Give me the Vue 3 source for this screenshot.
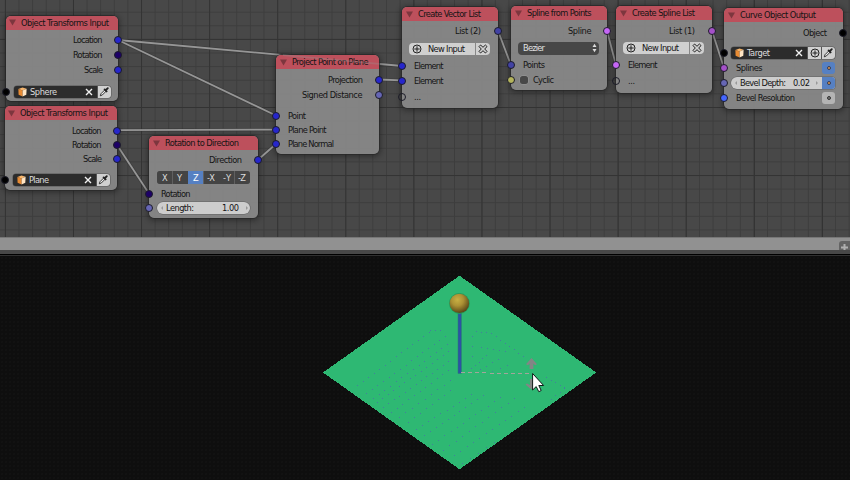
<script setup>
import { h } from 'vue'

// Tightly tracked label: keeps its text at a fixed advance width
const Label = (p) =>
  h('svg', { class: 'lbl', width: p.w, height: 14 }, [
    h('text', { x: 0, y: 10.4, textLength: p.w, lengthAdjust: 'spacing' }, p.t)
  ])
Label.props = ['t', 'w']

const BLUE = '#2626cc'
const NAVY = '#1d0067'
const LAV = '#6666b4'
const BLACK = '#000'
const MAG = '#c566f6'
const NONE = 'transparent'

const nodes = [
  { x: 5.5, y: 15.5, w: 112.5, h: 85.5, title: 'Object Transforms Input', tw: 88, rows: [
    { c: 40, k: 'out', t: 'Location', w: 29.5, pad: 16, s: BLUE },
    { c: 55, k: 'out', t: 'Rotation', w: 29.5, pad: 16, s: NAVY },
    { c: 70, k: 'out', t: 'Scale', w: 19, pad: 15.5, s: BLUE },
    { c: 91.8, k: 'object', t: 'Sphere', w: 27, s: BLACK }
  ] },
  { x: 4.5, y: 106, w: 112.5, h: 84, title: 'Object Transforms Input', tw: 88, rows: [
    { c: 130.5, k: 'out', t: 'Location', w: 29.5, pad: 16, s: BLUE },
    { c: 144.7, k: 'out', t: 'Rotation', w: 29.5, pad: 16, s: NAVY },
    { c: 159, k: 'out', t: 'Scale', w: 19, pad: 15.5, s: BLUE },
    { c: 180, k: 'object', t: 'Plane', w: 20, s: BLACK }
  ] },
  { x: 149, y: 136, w: 109, h: 82, title: 'Rotation to Direction', tw: 74, rows: [
    { c: 160, k: 'out', t: 'Direction', w: 33, pad: 16, s: BLUE },
    { c: 177.3, k: 'axes' },
    { c: 193.8, k: 'in', t: 'Rotation', w: 29.5, s: NAVY },
    { c: 208, k: 'length', s: LAV }
  ] },
  { x: 276, y: 55.3, w: 103, h: 98.7, title: 'Project Point on Plane', tw: 76.5, rows: [
    { c: 79.7, k: 'out', t: 'Projection', w: 35, pad: 16.5, s: BLUE },
    { c: 94.7, k: 'out', t: 'Signed Distance', w: 60.5, pad: 16.5, s: LAV },
    { c: 115.6, k: 'in', t: 'Point', w: 18, s: BLUE },
    { c: 129.8, k: 'in', t: 'Plane Point', w: 38.5, s: BLUE },
    { c: 144, k: 'in', t: 'Plane Normal', w: 46, s: BLUE }
  ] },
  { x: 402, y: 7.3, w: 96, h: 100.7, title: 'Create Vector List', tw: 63, rows: [
    { c: 31.5, k: 'out', t: 'List (2)', w: 26, pad: 17, s: '#4242a4' },
    { c: 49, k: 'new' },
    { c: 66, k: 'in', t: 'Element', w: 29.5, s: BLUE },
    { c: 81, k: 'in', t: 'Element', w: 29.5, s: BLUE },
    { c: 97, k: 'in', t: '...', w: 7, s: NONE }
  ] },
  { x: 511, y: 6.3, w: 96, h: 84, title: 'Spline from Points', tw: 64.5, rows: [
    { c: 31, k: 'out', t: 'Spline', w: 23.5, pad: 16, s: MAG },
    { c: 48.3, k: 'select', t: 'Bezier', w: 22 },
    { c: 65, k: 'in', t: 'Points', w: 22, s: '#4242a4' },
    { c: 80, k: 'check', t: 'Cyclic', w: 21, s: '#b4b45c' }
  ] },
  { x: 616, y: 6.3, w: 96, h: 86.7, title: 'Create Spline List', tw: 63, rows: [
    { c: 31, k: 'out', t: 'List (1)', w: 26, pad: 17, s: '#a450c8' },
    { c: 48, k: 'new' },
    { c: 65, k: 'in', t: 'Element', w: 29.5, s: MAG },
    { c: 81.5, k: 'in', t: '...', w: 7, s: NONE }
  ] },
  { x: 724, y: 8, w: 119, h: 101, title: 'Curve Object Output', tw: 76, rows: [
    { c: 32.6, k: 'out', t: 'Object', w: 24, pad: 16, s: BLACK },
    { c: 52.8, k: 'target', t: 'Target', w: 23, s: BLACK },
    { c: 67.8, k: 'in', t: 'Splines', w: 26.5, s: '#a450c8', btn: 'on' },
    { c: 82.8, k: 'bevel', s: LAV },
    { c: 97.8, k: 'in', t: 'Bevel Resolution', w: 59, s: '#4466ff', btn: 'off' }
  ] }
]

const axes = ['X', 'Y', 'Z', '-X', '-Y', '-Z']
const gap = (n, i) => (i ? n.rows[i].c - n.rows[i - 1].c - 14 : n.rows[0].c - 7 - n.y - 14) + 'px'

const wires = [
  [118, 40, 402, 66], [118, 40, 276, 115.5], [117, 130.2, 276, 129.6], [117, 145, 149, 193.5],
  [258, 159.7, 276, 144], [379, 79.5, 402, 80.3], [498, 31, 511, 65], [607, 31, 616, 65], [712, 31, 724, 68]
]

// Dotted rows on the plane: x1, y1, x2, y2, count
const runs = [
  [357, 385, 429, 332, 14], [366, 393, 445, 336, 15],
  [373, 398, 447, 344, 14], [377, 402, 448, 351, 14], [383, 407, 448, 361, 13], [391, 412, 448, 370, 11],
  [399, 417, 450, 380, 9], [408, 422, 450, 390, 8], [416, 429, 471, 394, 10], [424, 435, 483, 395, 11],
  [432, 444, 500, 397, 12], [443, 450, 514, 398, 12], [454, 455, 524, 407, 12], [462, 463, 494, 442, 5],
  [430, 330, 440, 330, 3], [476, 331, 491, 333, 4], [472, 336, 472, 356, 3], [491, 333, 523, 356, 8],
  [481, 347, 505, 351, 5], [471, 368, 486, 355, 5], [480, 369, 498, 359, 4], [492, 371, 507, 365, 3],
  [546, 377, 564, 387, 5], [551, 399, 564, 388, 4]
]
const dots = runs.flatMap(([a, b, c, d, n]) =>
  Array.from({ length: n }, (_, i) => [
    Math.round(a + ((c - a) * i) / (n - 1)), Math.round(b + ((d - b) * i) / (n - 1))
  ])
)
</script>

<template>
  <main class="screen">
    <section class="editor">
      <svg class="wires" width="850" height="237">
        <g v-for="(w, i) in wires" :key="i">
          <line class="shade" :x1="w[0]" :y1="w[1]" :x2="w[2]" :y2="w[3]" />
          <line class="core" :x1="w[0]" :y1="w[1]" :x2="w[2]" :y2="w[3]" />
        </g>
      </svg>

      <article v-for="(n, ni) in nodes" :key="ni" class="node"
        :style="{ left: n.x + 'px', top: n.y + 'px', width: n.w + 'px', height: n.h + 'px' }">
        <header>
          <svg class="tri" width="7" height="7"><path d="M0 .5H7L3.5 6.5Z" /></svg>
          <Label :t="n.title" :w="n.tw" />
        </header>
        <div v-for="(r, i) in n.rows" :key="i" class="row" :class="r.k" :style="{ marginTop: gap(n, i) }">
          <i v-if="r.s" class="socket" :style="{ background: r.s }"></i>

          <span v-if="r.k === 'out'" :style="{ paddingRight: r.pad + 'px' }"><Label :t="r.t" :w="r.w" /></span>

          <template v-else-if="r.k === 'in'">
            <Label :t="r.t" :w="r.w" />
            <b v-if="r.btn" class="dot" :class="r.btn"></b>
          </template>

          <div v-else-if="r.k === 'object' || r.k === 'target'" class="field">
            <svg class="cube" width="9" height="10" viewBox="0 0 9 10">
              <path fill="#f6b56c" d="M.4 2 4.5.4 8.6 1.8 4.6 3.4Z" />
              <path fill="#e88b33" d="M.4 2 4.6 3.4V9.6L.6 7.8Z" />
              <path fill="#ffe5c4" d="M4.6 3.4 8.6 1.8 8.3 7.8 4.6 9.6Z" />
            </svg>
            <Label :t="r.t" :w="r.w" />
            <svg class="x" width="8" height="8"><path d="M1 1 7 7M7 1 1 7" /></svg>
            <span v-if="r.k === 'target'" class="light">
              <svg width="10" height="10"><circle cx="5" cy="5" r="4" /><path d="M5 2.5V7.5M2.5 5H7.5" /></svg>
            </span>
            <span class="light">
              <svg width="11" height="11"><path class="fine" d="M1.3 9.8 2 7.7 6 3.7 7.3 5 3.3 9Z" /><path class="bulb" d="M5.6 3.4 7.6 5.4M7 4 8.8 2.2" /></svg>
            </span>
          </div>

          <div v-else-if="r.k === 'axes'" class="seg">
            <span v-for="a in axes" :key="a" :class="{ on: a === 'Z' }"><Label :t="a" :w="a.length > 1 ? 8 : 5.8" /></span>
          </div>

          <div v-else-if="r.k === 'length'" class="num">
            <i class="tl"></i><Label t="Length:" :w="28" /><Label class="val" t="1.00" :w="17" /><i class="tr"></i>
          </div>

          <div v-else-if="r.k === 'bevel'" class="num part">
            <i class="tl"></i><Label t="Bevel Depth:" :w="46" /><Label class="val" t="0.02" :w="17" /><i class="tr"></i>
            <b class="dot on"></b>
          </div>

          <div v-else-if="r.k === 'new'" class="adder">
            <span class="plus"><svg width="10" height="10"><circle cx="5" cy="5" r="4" /><path d="M5 2.3V7.7M2.3 5H7.7" /></svg></span>
            <Label t="New Input" :w="37" />
            <span class="close"><svg width="10" height="10"><path d="M2.6 1 5 3.3 7.4 1 9 2.6 6.7 5 9 7.4 7.4 9 5 6.7 2.6 9 1 7.4 3.3 5 1 2.6Z" /></svg></span>
          </div>

          <div v-else-if="r.k === 'select'" class="drop-down">
            <Label :t="r.t" :w="r.w" />
            <svg width="5" height="10"><path d="M.5 4 2.5.8 4.5 4ZM.5 6 2.5 9.2 4.5 6Z" /></svg>
          </div>

          <template v-else-if="r.k === 'check'">
            <i class="box"></i><Label :t="r.t" :w="r.w" />
          </template>
        </div>
      </article>

      <svg class="wires ghost" width="850" height="237">
        <line class="core" x1="283" y1="55.2" x2="379" y2="63.9" />
      </svg>
    </section>

    <div class="bar"><span><svg width="7" height="7"><path d="M3.5 0V7M0 3.5H7" /></svg></span></div>
    <div class="edge"></div>

    <section class="view">
      <svg width="850" height="224" viewBox="0 256 850 224">
        <defs>
          <radialGradient id="ball" cx=".4" cy=".32" r=".68">
            <stop offset="0" stop-color="#c8b043" />
            <stop offset=".45" stop-color="#ac9134" />
            <stop offset="1" stop-color="#594717" />
          </radialGradient>
        </defs>
        <path d="M459.5 275.7 596.2 372.5 459.5 469.3 323 372.5Z" fill="#2eb873" shape-rendering="crispEdges" />
        <g fill="#43809d"><rect v-for="(d, i) in dots" :key="i" :x="d[0]" :y="d[1]" width="1" height="1" /></g>
        <rect x="458" y="311" width="3.4" height="62.5" fill="#2c53a3" stroke="#277e70" stroke-width=".5" />
        <circle cx="459.4" cy="303.5" r="10.4" fill="#279858" />
        <circle cx="459.4" cy="303.4" r="9.7" fill="url(#ball)" />
        <path d="M461 372.5H487M490 373.5H530" stroke="#a3a49a" stroke-dasharray="4 3" />
        <path d="M531.5 358 537 364.3 535 365.2 533.4 363.5V369H529.6V363.5L528 365.2 526 364.3Z" fill="#848585" />
        <path d="M530 379H534V390L530 388.5 525.5 384.5 527 383.5 530 385Z" fill="#848585" />
        <path d="M532.6 373.5V390L536.2 386.6 538.8 391.7 541.2 390.5 538.8 385.5H543.6Z" fill="#fff" stroke="#101b18" stroke-width="1" />
      </svg>
    </section>
  </main>
</template>

<style>
body { margin: 0; overflow: hidden; background: #0f0f0f; }
.lbl { display: block; flex: none; overflow: visible; }
.lbl text { font: 9.2px "DejaVu Sans Condensed", "DejaVu Sans", sans-serif; fill: currentColor; }
</style>

<style scoped>
.screen { width: 850px; height: 480px; display: flex; flex-direction: column; overflow: hidden; background: #0f0f0f; }
.editor {
  position: relative; height: 237px; flex: none; overflow: hidden; background-color: #484848;
  background-image:
    linear-gradient(90deg, #333 1px, transparent 1px), linear-gradient(#333 1px, transparent 1px),
    linear-gradient(90deg, #3d3d3d 1px, transparent 1px), linear-gradient(#3d3d3d 1px, transparent 1px);
  background-size: 68.1px 68.1px, 68.1px 68.1px, 13.62px 13.62px, 13.62px 13.62px;
  background-position: 4.9px 0, 0 38.9px, 4.9px 0, 0 11.7px;
}
.wires { position: absolute; left: 0; top: 0; }
.shade { stroke: #333; stroke-width: 3.2; opacity: .5; }
.core { stroke: #969696; stroke-width: 1.8; }
.ghost { opacity: .3; }
.node {
  position: absolute; box-sizing: border-box; border-radius: 5px; background: rgba(134, 134, 134, .96);
  box-shadow: 0 0 0 .7px #292929, 0 1px 5px 2px rgba(20, 20, 20, .42); color: #141414;
}
header { height: 14px; display: flex; align-items: center; gap: 5px; padding-left: 3.5px; border-radius: 5px 5px 0 0; background: #bd505c; }
.tri { fill: #7d363e; }
.row { position: relative; height: 14px; display: flex; align-items: center; }
.out { justify-content: flex-end; }
.in { padding-left: 12px; }
.socket { position: absolute; left: -4px; top: 3px; width: 8px; height: 8px; box-sizing: border-box; border: 1px solid #1c1c28; border-radius: 50%; }
.out .socket { left: auto; right: -4px; }
.object { padding: 0 7px 0 8px; }
.target { padding: 0 8px 0 7px; }
.field { flex: 1; height: 12px; display: flex; align-items: center; border-radius: 3px; overflow: hidden; background: #2c2c2c; color: #ddd; box-shadow: 0 0 0 .5px #555; }
.cube { margin: 0 3px 0 4px; }
.x { margin-left: auto; margin-right: 4px; fill: none; stroke: #f2f2f2; stroke-width: 1.4; }
.light { width: 14px; height: 12px; display: flex; align-items: center; justify-content: center; background: #d0d0d0; border-left: .5px solid #555; box-sizing: border-box; }
.light svg, .plus svg, .close svg { fill: none; stroke: #222; stroke-width: 1; }
.light .fine { fill: #eee; stroke-width: .9; }
.light .bulb { stroke-width: 1.9; stroke-linecap: round; }
.axes { padding: 0 8px; }
.seg { flex: 1; height: 13px; display: grid; grid-template-columns: repeat(6, 1fr); gap: .6px; border-radius: 3px; overflow: hidden; background: #606060; color: #ddd; }
.seg span { display: flex; align-items: center; justify-content: center; background: #444; }
.seg .on { background: #5680c2; color: #fff; }
.length { padding: 0 8px; }
.num { flex: 1; height: 12px; display: flex; align-items: center; border-radius: 6px; background: #cdcdcd; overflow: hidden; box-shadow: 0 0 0 .5px #606060; }
.val { margin-left: auto; }
.tl, .tr { flex: none; border: 2.5px solid transparent; border-right-color: #999; width: 0; height: 0; margin-right: 3px; margin-left: 2px; }
.tr { border-right-color: transparent; border-left-color: #999; margin-left: 7px; margin-right: 0; }
.bevel { margin: 0 8px 0 7px; }
.bevel .socket { left: -11px; }
.part { border-radius: 6px 3px 3px 6px; }
.dot { width: 13px; height: 12px; display: flex; align-items: center; justify-content: center; border-radius: 3px; background: #5680c2; margin-left: auto; margin-right: 8px; }
.dot::before { content: ""; width: 2px; height: 2px; border: 1px solid #333c58; border-radius: 50%; background: #e89a4a; }
.dot.off { background: #b4b4b4; }
.dot.off::before { background: #777; border-color: #333; }
.part .dot { border-radius: 0; margin-right: 0; margin-left: 2px; flex: none; }
.part .tr { margin-left: 6px; }
.adder { flex: 1; height: 12px; margin: 0 8px 0 6.5px; display: flex; align-items: center; border-radius: 4px; background: #d0d0d0; }
.plus { width: 19.5px; display: flex; }
.plus svg { margin-left: 3px; }
.close { width: 14px; height: 12px; display: flex; align-items: center; justify-content: center; margin-left: auto; border-left: .5px solid #888; }
.drop-down { flex: 1; height: 13px; margin: 0 8px 0 6.5px; padding: 0 2px 0 5px; display: flex; align-items: center; justify-content: space-between; border-radius: 4px; background: #474747; color: #e0e0e0; }
.drop-down svg { fill: #ddd; }
.check { padding-left: 8.5px; gap: 5px; }
.box { width: 8px; height: 8px; border-radius: 2.5px; background: #484848; box-shadow: 0 0 0 .5px #999; }
.bar { height: 13px; flex: none; display: flex; justify-content: flex-end; background: #919191; border-top: 1px solid #777; box-sizing: border-box; }
.bar span { width: 11px; height: 13px; margin-top: 3px; display: flex; align-items: center; justify-content: center; border-radius: 3px 0 0 3px; background: #646464; }
.bar svg { stroke: #b0b0b0; stroke-width: 2; }
.edge { height: 6px; flex: none; box-sizing: border-box; background: linear-gradient(#484848 4px, #000 4px 5px, #303030 5px); }
.view { flex: 1; background-color: #0e0e0e; background-image: radial-gradient(#121212 .7px, transparent .8px); background-size: 4px 4px; }
.view svg { display: block; }
</style>
